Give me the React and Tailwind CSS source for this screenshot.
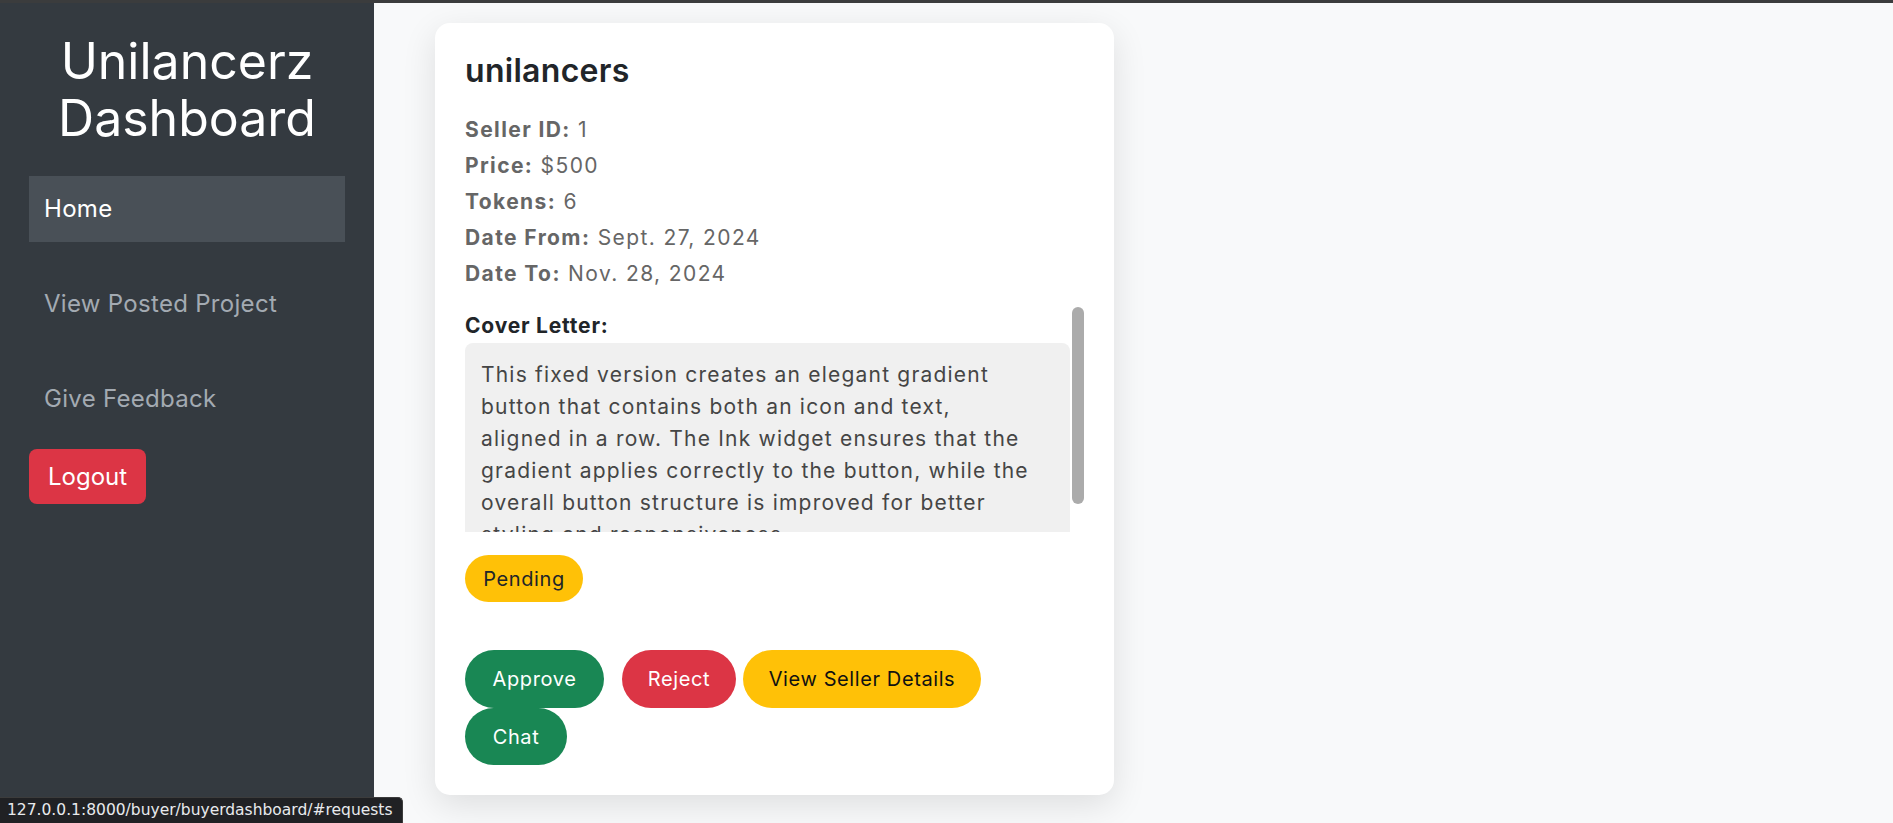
import { useState } from 'react'

const navItems = [
  { label: 'Home', href: '#home' },
  { label: 'View Posted Project', href: '#projects' },
  { label: 'Give Feedback', href: '#feedback' },
]

const request = {
  title: 'unilancers',
  sellerId: 1,
  price: '$500',
  tokens: 6,
  dateFrom: 'Sept. 27, 2024',
  dateTo: 'Nov. 28, 2024',
  coverLetter: [
    'This fixed version creates an elegant gradient',
    'button that contains both an icon and text,',
    'aligned in a row. The Ink widget ensures that the',
    'gradient applies correctly to the button, while the',
    'overall button structure is improved for better',
    'styling and responsiveness.',
  ],
  status: 'Pending',
}

function Sidebar({ active, onSelect }) {
  return (
    <aside className="w-[374px] shrink-0 bg-[#343a40] px-[29px] pt-[30px]">
      <h1 className="text-center text-[50px] leading-[57px] font-normal text-white">
        Unilancerz Dashboard
      </h1>
      <ul className="mt-[29px] flex flex-col gap-[29px]">
        {navItems.map((item) => (
          <li key={item.label}>
            <a
              href={item.href}
              onClick={() => onSelect(item.label)}
              className={`flex h-[66px] items-center px-[15px] text-[24px] tracking-[0.3px] ${
                active === item.label ? 'bg-[#495057] text-white' : 'text-[#a3aab2]'
              }`}
            >
              {item.label}
            </a>
          </li>
        ))}
      </ul>
      <button className="mt-[17px] h-[55px] rounded-[8px] bg-[#dc3545] px-[19px] text-[24px] text-white">
        Logout
      </button>
    </aside>
  )
}

function RequestCard({ data }) {
  return (
    <div className="w-[679px] rounded-[15px] bg-white px-[30px] pt-[29px] pb-[30px] shadow-[0_10px_34px_rgba(0,0,0,0.11)]">
      <h3 className="text-[32px] leading-[38px] font-semibold tracking-[0.3px] text-[#212529]">{data.title}</h3>

      <div className="mt-[22px] text-[21px] leading-[36px] tracking-[1.4px] text-[#666]">
        <p><b className="font-bold">Seller ID:</b> {data.sellerId}</p>
        <p><b className="font-bold">Price:</b> {data.price}</p>
        <p><b className="font-bold">Tokens:</b> {data.tokens}</p>
        <p><b className="font-bold">Date From:</b> {data.dateFrom}</p>
        <p><b className="font-bold">Date To:</b> {data.dateTo}</p>
      </div>

      {/* Cover letter, scrolled to top */}
      <div className="relative mt-[15px] h-[225px]">
        <div className="h-full overflow-hidden pt-[4px] pr-[14px]">
          <p className="mb-[2px] text-[21px] leading-[30px] font-bold tracking-[0.8px] text-[#212529]">Cover Letter:</p>
          <div className="rounded-[8px] bg-[#f0f0f0] p-[16px] text-[21px] leading-[32px] tracking-[1.2px] text-[#454545]">
            {data.coverLetter.map((line, i) => (
              <span key={i}>
                {line}
                {i < data.coverLetter.length - 1 && <br />}
              </span>
            ))}
          </div>
        </div>
        <div className="absolute top-0 right-0 h-[197px] w-[12px] rounded-full bg-[#ababab]" />
      </div>

      <span className="mt-[23px] inline-flex h-[47px] w-[118px] items-center justify-center rounded-full bg-[#ffc107] text-[20px] tracking-[0.6px] text-[#212529]">
        {data.status}
      </span>

      <div className="mt-[48px] flex flex-col text-[20px] tracking-[0.6px]">
        <div className="flex">
          <button className="h-[58px] w-[139px] rounded-full bg-[#198754] text-white">Approve</button>
          <button className="ml-[18px] h-[58px] w-[114px] rounded-full bg-[#dc3545] text-white">Reject</button>
          <button className="ml-[7px] h-[58px] w-[238px] rounded-full bg-[#ffc107] text-[#111]">View Seller Details</button>
        </div>
        <div className="flex">
          <button className="h-[57px] w-[102px] rounded-full bg-[#198754] text-white">Chat</button>
        </div>
      </div>
    </div>
  )
}

export default function App() {
  const [active, setActive] = useState('Home')

  return (
    <div className="relative flex h-screen flex-col overflow-hidden font-['Inter',sans-serif]">
      <div className="h-[3px] shrink-0 bg-[#3b3c3d]" />
      <div className="flex min-h-0 flex-1">
        <Sidebar active={active} onSelect={setActive} />
        <main className="flex-1 bg-[#f8f9fa] pt-[20px] pl-[61px]">
          <RequestCard data={request} />
        </main>
      </div>

      {/* browser status hint */}
      <div className="absolute bottom-0 left-0 flex h-[26px] w-[403px] items-center rounded-tr-[5px] border-t border-r border-[#3c3c3c] bg-[#202124] pl-[7px] font-['DejaVu_Sans',sans-serif] text-[15.5px] text-[#e8eaed]">
        127.0.0.1:8000/buyer/buyerdashboard/#requests
      </div>
    </div>
  )
}
